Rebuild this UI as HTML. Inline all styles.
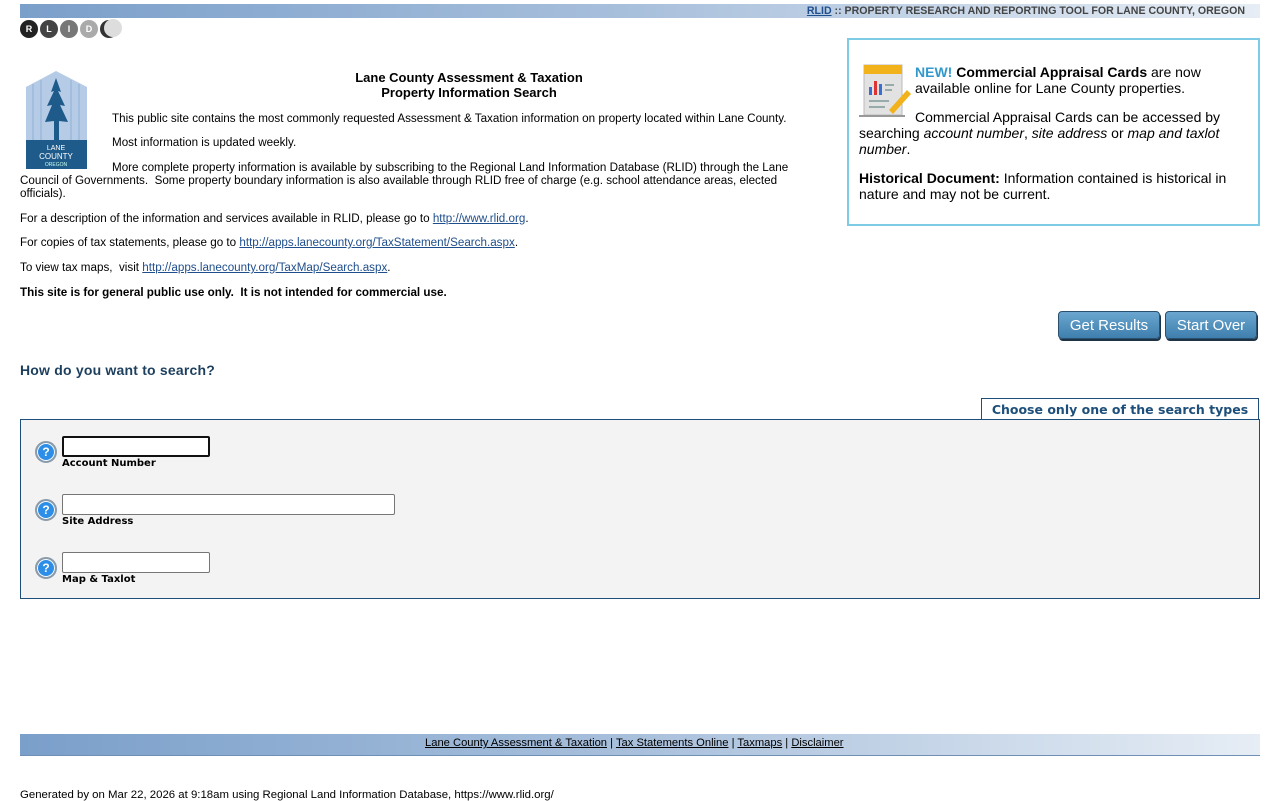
<!DOCTYPE html>
<html><head><meta charset="utf-8"><style>
body{margin:0;width:1280px;height:800px;position:relative;font-family:"Liberation Sans",Arial,sans-serif;font-size:11.65px;color:#000;background:#fff;overflow:hidden}
.a{position:absolute;white-space:nowrap}
a{color:#1f4e8c}
.bar{position:absolute;left:20px;width:1240px;background:linear-gradient(90deg,#7a9fca 0%,#a9c0dc 50%,#e6edf5 100%)}
.circ{position:absolute;top:20px;width:18px;height:18px;border-radius:50%;color:#fff;font-size:9px;font-weight:bold;text-align:center;line-height:18px}
.q{position:absolute;left:35px;width:18px;height:18px;border-radius:50%;background:#2d8ee8;border:2px solid #8a9aa8;box-shadow:inset 0 0 0 1px #fff;color:#fff;font-weight:bold;font-size:12px;text-align:center;line-height:18px}
.in{position:absolute;left:62px;height:19px;border:1px solid #767676;border-radius:2px;background:#fff;box-sizing:border-box}
.lab{position:absolute;left:62px;font-family:"DejaVu Sans",sans-serif;font-size:10px;font-weight:bold}
.btn{position:absolute;top:311px;height:28px;border-radius:4px;background:linear-gradient(#6aa6cf,#3f7fae);border:1px solid #2b4f6e;box-shadow:1px 2px 0 #1d3347;color:#fff;font-size:15px;text-align:center;line-height:27px;box-sizing:border-box}
</style></head><body>
<div class="bar" style="top:4px;height:14px"></div>
<div class="a" style="top:5px;right:35px;font-size:10.6px;font-weight:bold;color:#444"><a href="#" style="color:#1f4e8c">RLID</a> :: PROPERTY RESEARCH AND REPORTING TOOL FOR LANE COUNTY, OREGON</div>
<div class="circ" style="left:20px;background:#222">R</div>
<div class="circ" style="left:40px;background:#444">L</div>
<div class="circ" style="left:60px;background:#777">I</div>
<div class="circ" style="left:80px;background:#aaa">D</div>
<div class="circ" style="left:100px;background:#333"></div>
<div class="circ" style="left:104px;top:19px;background:#ddd"></div>

<svg class="a" style="left:25px;top:70px" width="63" height="99" viewBox="0 0 63 99">
<path d="M1 17 L31 1 L62 17 V70 H1 Z" fill="#b6cbe6"/>
<g stroke="#8fb0d8" stroke-width="1"><line x1="8" y1="14" x2="8" y2="70"/><line x1="16" y1="10" x2="16" y2="70"/><line x1="46" y1="10" x2="46" y2="70"/><line x1="54" y1="14" x2="54" y2="70"/></g>
<path d="M31 8 L36 22 L33 21 L40 36 L35 35 L43 52 L34 51 L34 70 L29 70 L29 51 L20 52 L27 35 L22 36 L29 21 L26 22Z" fill="#1e5a8a"/>
<rect x="1" y="70" width="61" height="29" fill="#1e5a8a"/>
<text x="31" y="80" fill="#fff" font-size="7" text-anchor="middle" font-family="Liberation Sans">LANE</text>
<text x="31" y="89" fill="#fff" font-size="8" text-anchor="middle" font-family="Liberation Sans">COUNTY</text>
<text x="31" y="96" fill="#cfe" font-size="5" text-anchor="middle" font-family="Liberation Sans">OREGON</text>
</svg>

<div class="a" style="left:469px;top:70px;transform:translateX(-50%);text-align:center;font-size:13px;font-weight:bold;line-height:15px">Lane County Assessment &amp; Taxation<br>Property Information Search</div>
<div class="a" style="left:112px;top:112px">This public site contains the most commonly requested Assessment &amp; Taxation information on property located within Lane County.</div>
<div class="a" style="left:112px;top:136px">Most information is updated weekly.</div>
<div class="a" style="left:112px;top:161px">More complete property information is available by subscribing to the Regional Land Information Database (RLID) through the Lane</div>
<div class="a" style="left:20px;top:174px">Council of Governments.&nbsp; Some property boundary information is also available through RLID free of charge (e.g. school attendance areas, elected</div>
<div class="a" style="left:20px;top:187px">officials).</div>
<div class="a" style="left:20px;top:212px">For a description of the information and services available in RLID, please go to <a href="#">http://www.rlid.org</a>.</div>
<div class="a" style="left:20px;top:236px">For copies of tax statements, please go to <a href="#">http://apps.lanecounty.org/TaxStatement/Search.aspx</a>.</div>
<div class="a" style="left:20px;top:261px">To view tax maps,&nbsp; visit <a href="#">http://apps.lanecounty.org/TaxMap/Search.aspx</a>.</div>
<div class="a" style="left:20px;top:286px;font-weight:bold">This site is for general public use only.&nbsp; It is not intended for commercial use.</div>

<div style="position:absolute;left:847px;top:38px;width:413px;height:188px;border:2px solid #7ecbe6;box-sizing:border-box"></div>
<svg class="a" style="left:859px;top:63px" width="54" height="56" viewBox="0 0 54 56">
<rect x="5" y="2" width="38" height="50" fill="#e2e2e2" stroke="#bbb"/>
<rect x="5" y="2" width="38" height="9" fill="#f2b21c"/>
<rect x="10" y="24" width="3" height="8" fill="#3a6fd0"/><rect x="15" y="18" width="3" height="14" fill="#d33"/><rect x="20" y="21" width="3" height="11" fill="#3a6fd0"/>
<g stroke="#9aa" stroke-width="2"><line x1="26" y1="22" x2="35" y2="22"/><line x1="26" y1="27" x2="33" y2="27"/><line x1="10" y1="38" x2="30" y2="38"/><line x1="10" y1="44" x2="26" y2="44"/></g>
<path d="M30 47 L48 27 L52 31 L34 51 Z" fill="#f2b21c"/>
<rect x="0" y="52" width="46" height="2" fill="#999"/>
</svg>
<div class="a" style="left:915px;top:64px;font-size:14px;line-height:16px"><b style="color:#3399cc">NEW!</b> <b>Commercial Appraisal Cards</b> are now<br>available online for Lane County properties.</div>
<div class="a" style="left:915px;top:109px;font-size:14px;line-height:16px">Commercial Appraisal Cards can be accessed by</div>
<div class="a" style="left:859px;top:125px;font-size:14px;line-height:16px">searching <i>account number</i>, <i>site address</i> or <i>map and taxlot</i><br><i>number</i>.</div>
<div class="a" style="left:859px;top:170px;font-size:14px;line-height:16px"><b>Historical Document:</b> Information contained is historical in<br>nature and may not be current.</div>

<div class="btn" style="left:1058px;width:102px">Get Results</div>
<div class="btn" style="left:1165px;width:92px">Start Over</div>

<div class="a" style="left:20px;top:362px;font-size:14px;font-weight:bold;color:#1d3f5e;letter-spacing:0.2px">How do you want to search?</div>

<div style="position:absolute;left:981px;top:398px;width:278px;height:22px;border:1px solid #1d4f7a;border-bottom:none;background:#fff;box-sizing:border-box;font-family:'DejaVu Sans',sans-serif;font-size:12.5px;font-weight:bold;color:#1d4f7a;text-align:center;line-height:21px">Choose only one of the search types</div>
<div style="position:absolute;left:20px;top:419px;width:1240px;height:180px;border:1px solid #1d4f7a;background:#f3f3f3;box-sizing:border-box"></div>

<div class="q" style="top:441px">?</div>
<div class="in" style="top:436px;width:148px;height:21px;border:2px solid #111"></div>
<div class="lab" style="top:458px">Account Number</div>
<div class="q" style="top:499px">?</div>
<div class="in" style="top:494px;width:333px;height:21px"></div><div class="lab" style="top:516px">Site Address</div>
<div class="q" style="top:557px">?</div>
<div class="in" style="top:552px;width:148px;height:21px"></div><div class="lab" style="top:574px">Map &amp; Taxlot</div>

<div class="bar" style="top:734px;height:21px;border-bottom:1px solid #6f8fb5"></div>
<div class="a" style="left:425px;top:737px;font-size:11.2px;color:#000"><a href="#" style="color:#000">Lane County Assessment &amp; Taxation</a> | <a href="#" style="color:#000">Tax Statements Online</a> | <a href="#" style="color:#000">Taxmaps</a> | <a href="#" style="color:#000">Disclaimer</a></div>
<div class="a" style="left:20px;top:789px;font-size:11.4px">Generated by on Mar 22, 2026 at 9:18am using Regional Land Information Database, https://www.rlid.org/</div>
</body></html>
